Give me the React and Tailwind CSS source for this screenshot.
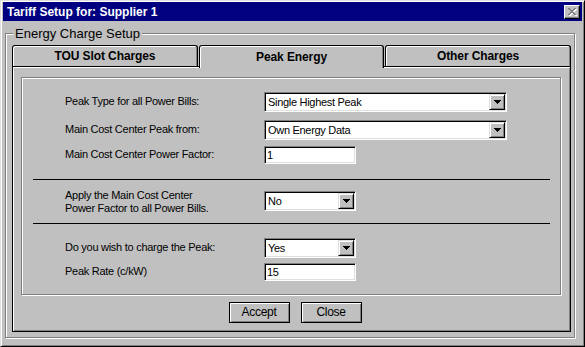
import React from "react";

const sunken =
  "border border-t-[#808080] border-l-[#808080] border-r-white border-b-white shadow-[inset_1px_1px_0_#000,inset_-1px_-1px_0_#dfdfdf]";

function DropBtn() {
  return (
    <div className="w-[16px] h-[16px] shrink-0 flex items-center justify-center bg-[#c0c0c0] border border-t-[#dfdfdf] border-l-[#dfdfdf] border-r-black border-b-black shadow-[inset_1px_1px_0_#fff,inset_-1px_-1px_0_#808080]">
      <svg width="7" height="4" viewBox="0 0 7 4" shapeRendering="crispEdges">
        <path d="M0 0H7V1H6V2H5V3H4V4H3V3H2V2H1V1H0Z" fill="#000" />
      </svg>
    </div>
  );
}

function Select({ w, value }) {
  return (
    <div className={`${w} h-[20px] bg-white ${sunken} p-[1px] flex items-stretch`}>
      <div className="flex-1 pl-[2px] text-[11px] leading-[16px] tracking-[-0.3px] text-black whitespace-nowrap overflow-hidden">
        {value}
      </div>
      <DropBtn />
    </div>
  );
}

function Input({ value }) {
  return (
    <div className={`w-[92px] h-[18px] bg-white ${sunken} p-[1px]`}>
      <div className="pl-[1px] text-[11px] leading-[14px] tracking-[-0.3px] text-black">{value}</div>
    </div>
  );
}

function Row({ label, children, h = "h-[20px]" }) {
  return (
    <div className={`flex items-center ${h}`}>
      <div className="w-[242px] shrink-0 pl-[43px] pb-[2px] text-[11px] leading-[14px] tracking-[-0.27px] text-black whitespace-nowrap">
        {label}
      </div>
      {children}
    </div>
  );
}

function Tab({ label, selected, w }) {
  return (
    <div
      className={`${w} ${
        selected ? "h-[23px] pb-0" : "h-[21px]"
      } shrink-0 bg-[#c0c0c0] border-t border-l border-r border-black rounded-t-[3px] shadow-[inset_1px_1px_0_#fff,inset_-1px_0_0_#808080] flex items-center justify-center text-[12px] font-bold tracking-[-0.1px] text-black`}
    >
      {label}
    </div>
  );
}

function CloseGlyph() {
  const px = [
    [0, 0], [1, 0], [6, 0], [7, 0],
    [1, 1], [2, 1], [5, 1], [6, 1],
    [2, 2], [3, 2], [4, 2], [5, 2],
    [3, 3], [4, 3],
    [2, 4], [3, 4], [4, 4], [5, 4],
    [1, 5], [2, 5], [5, 5], [6, 5],
    [0, 6], [1, 6], [6, 6], [7, 6],
  ];
  return (
    <svg width="9" height="8" viewBox="0 0 9 8" shapeRendering="crispEdges">
      {px.map(([x, y], i) => (
        <rect key={"w" + i} x={x + 1} y={y + 1} width="1" height="1" fill="#fff" />
      ))}
      {px.map(([x, y], i) => (
        <rect key={"g" + i} x={x} y={y} width="1" height="1" fill="#808080" />
      ))}
    </svg>
  );
}

export default function App() {
  return (
    <div className="w-[585px] h-[347px] bg-[#c0c0c0] border border-t-[#dfdfdf] border-l-[#dfdfdf] border-r-black border-b-black shadow-[inset_1px_1px_0_#fff,inset_-1px_-1px_0_#808080] px-[2px] pt-[1px] flex flex-col font-['Liberation_Sans',Arial,Helvetica,sans-serif] select-none">
      {/* Title bar */}
      <div className="h-[19px] shrink-0 bg-[#000080] flex items-center justify-between pl-[4px] pr-[2px]">
        <span className="text-white text-[12px] font-bold leading-[19px] pt-[1px]">
          Tariff Setup for: Supplier 1
        </span>
        <div className="w-[16px] h-[14px] bg-[#c0c0c0] border border-t-white border-l-white border-r-black border-b-black shadow-[inset_-1px_-1px_0_#808080] flex items-center justify-center">
          <CloseGlyph />
        </div>
      </div>

      {/* Group box */}
      <div className="relative mt-[12px] ml-[2px] w-[570px] h-[305px] shrink-0 border border-[#808080] shadow-[inset_1px_1px_0_#fff,1px_1px_0_#fff] pl-[6px] pt-[11px] pr-[3px] pb-[5px] flex flex-col">
        <div className="absolute left-[7px] top-[-8px] px-[2px] bg-[#c0c0c0] text-[13px] leading-[15px] text-black whitespace-nowrap">
          Energy Charge Setup
        </div>

        {/* Tabs */}
        <div className="relative z-10 flex items-start gap-[1px] h-[21px] shrink-0">
          <Tab w="w-[186px]" label="TOU Slot Charges" />
          <Tab w="w-[185px]" label="Peak Energy" selected />
          <Tab w="w-[186px]" label="Other Charges" />
        </div>

        {/* Tab panel */}
        <div className="h-[266px] shrink-0 border border-black shadow-[inset_1px_1px_0_#fff,inset_-1px_-1px_0_#808080] flex flex-col">
          <div className="ml-[8px] mt-[10px] w-[540px] h-[218px] shrink-0 border border-[#808080] shadow-[inset_1px_1px_0_#fff,1px_1px_0_#fff] flex flex-col pt-[14px]">
            <Row label="Peak Type for all Power Bills:">
              <Select w="w-[243px]" value="Single Highest Peak" />
            </Row>
            <div className="mt-[8px]">
              <Row label="Main Cost Center Peak from:">
                <Select w="w-[243px]" value="Own Energy Data" />
              </Row>
            </div>
            <div className="mt-[6px]">
              <Row label="Main Cost Center Power Factor:" h="h-[18px]">
                <Input value="1" />
              </Row>
            </div>
            <div className="mt-[15px] h-px bg-black ml-[11px] mr-[10px]" />
            <div className="mt-[11px] flex items-center h-[20px]">
              <div className="w-[242px] shrink-0 pl-[43px] pt-[2px] text-[11px] leading-[13px] tracking-[-0.27px] text-black whitespace-nowrap">
                Apply the Main Cost Center
                <br />
                Power Factor to all Power Bills.
              </div>
              <Select w="w-[92px]" value="No" />
            </div>
            <div className="mt-[12px] h-px bg-black ml-[11px] mr-[10px]" />
            <div className="mt-[14px]">
              <Row label="Do you wish to charge the Peak:">
                <Select w="w-[92px]" value="Yes" />
              </Row>
            </div>
            <div className="mt-[5px]">
              <Row label="Peak Rate (c/kW)" h="h-[18px]">
                <Input value="15" />
              </Row>
            </div>
          </div>

          <div className="mt-[7px] flex justify-center gap-[11px] pl-[7px]">
            <button className="w-[61px] h-[21px] bg-[#c0c0c0] border border-black shadow-[inset_1px_1px_0_#fff,inset_-1px_-1px_0_#808080] text-[12px] leading-[17px] tracking-[-0.3px] text-black">
              Accept
            </button>
            <button className="w-[61px] h-[21px] bg-[#c0c0c0] border border-black shadow-[inset_1px_1px_0_#fff,inset_-1px_-1px_0_#808080] text-[12px] leading-[17px] tracking-[-0.3px] text-black">
              Close
            </button>
          </div>
        </div>
      </div>
    </div>
  );
}
